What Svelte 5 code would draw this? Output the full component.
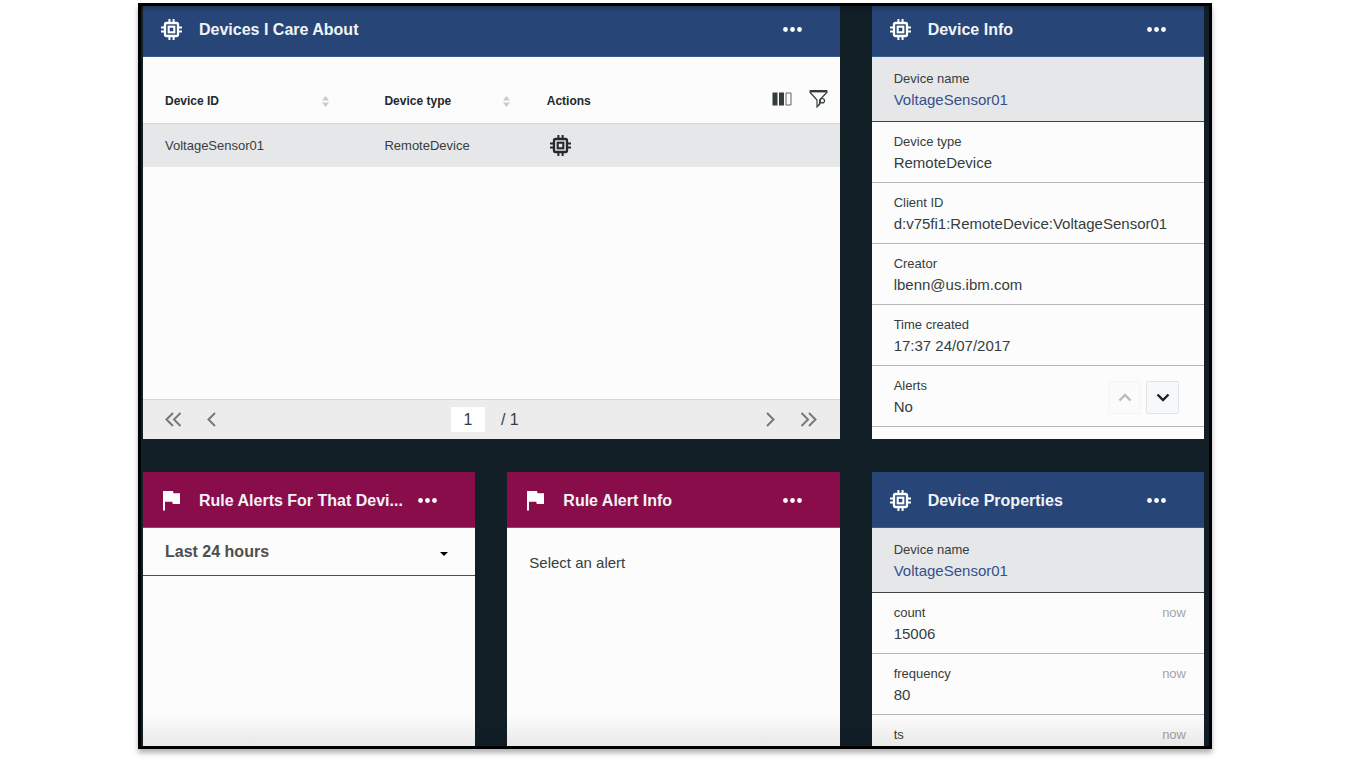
<script>
  const deviceInfo = [
    { label: 'Device type', value: 'RemoteDevice' },
    { label: 'Client ID', value: 'd:v75fi1:RemoteDevice:VoltageSensor01' },
    { label: 'Creator', value: 'lbenn@us.ibm.com' },
    { label: 'Time created', value: '17:37 24/07/2017' },
    { label: 'Alerts', value: 'No' }
  ];
  const properties = [
    { label: 'count', value: '15006' },
    { label: 'frequency', value: '80' },
    { label: 'ts', value: '' }
  ];
  const devices = [{ id: 'VoltageSensor01', type: 'RemoteDevice' }];
  let page = $state('1');
  let range = $state('Last 24 hours');
</script>

{#snippet chip()}
  <svg class="icon" viewBox="0 0 21 21" width="21" height="21" fill="none" stroke="currentColor" aria-hidden="true">
    <rect x="4" y="4" width="13" height="13" rx="1.5" stroke-width="2.300" />
    <rect x="7.700" y="7.700" width="5.600" height="5.600" stroke-width="2.100" />
    <path d="M8.400 0v4M12.600 0v4M8.400 17v4M12.600 17v4M0 8.400h4M0 12.600h4M17 8.400h4M17 12.600h4" stroke-width="2" />
  </svg>
{/snippet}

{#snippet flag()}
  <svg class="icon" viewBox="0 0 21 21" width="21" height="21" fill="currentColor" aria-hidden="true">
    <path d="M2 1h10l.5 2.300H19V14h-7.200l-.6-2.200H4V20.500H2z" />
  </svg>
{/snippet}

{#snippet sort()}
  <svg class="sort" viewBox="0 0 7 11" width="7" height="11" fill="#c9cbcd" aria-hidden="true">
    <path d="M3.500 0L7 4.500H0zM0 6.500h7L3.500 11z" />
  </svg>
{/snippet}

{#snippet head(title, icon)}
  <header class="head">
    {@render icon()}
    <h2>{title}</h2>
    <button class="plain dots" aria-label="More options">
      <svg viewBox="0 0 19 5" width="19" height="5" fill="currentColor" aria-hidden="true">
        <circle cx="2.500" cy="2.500" r="2.400" /><circle cx="9.500" cy="2.500" r="2.400" /><circle cx="16.500" cy="2.500" r="2.400" />
      </svg>
    </button>
  </header>
{/snippet}

{#snippet deviceName()}
  <div class="entry selected">
    <dt>Device name</dt>
    <dd><a href="#device">VoltageSensor01</a></dd>
  </div>
{/snippet}

<main class="frame">
  <div class="board">
    <section class="card blue wide">
      {@render head('Devices I Care About', chip)}
      <div class="fill">
        <table>
          <thead>
            <tr>
              <th class="id"><div class="cell">Device ID {@render sort()}</div></th>
              <th class="type"><div class="cell">Device type {@render sort()}</div></th>
              <th>
                <div class="cell">
                  Actions
                  <span class="tools">
                    <button class="plain" aria-label="Choose columns">
                      <svg viewBox="0 0 20 14" width="20" height="14" aria-hidden="true">
                        <path d="M.5.5h5v13h-5zM7 .5h5v13H7z" fill="#343c3e" />
                        <path d="M14 1h5v12h-5z" fill="none" stroke="#5d6466" />
                      </svg>
                    </button>
                    <button class="plain" aria-label="Filter">
                      <svg viewBox="0 0 19 18" width="19" height="18" fill="none" stroke="#343c3e" stroke-width="1.200" aria-hidden="true">
                        <path d="M.6 1.200h17.800" stroke-width="2.400" />
                        <path d="M.8 2L8 10v7l2.600-2.400V10L18.200 2" />
                        <circle cx="13.300" cy="10.700" r="2.200" />
                        <path d="M11.800 12.200L9.500 15" />
                      </svg>
                    </button>
                  </span>
                </div>
              </th>
            </tr>
          </thead>
          <tbody>
            {#each devices as device}
              <tr>
                <td>{device.id}</td>
                <td>{device.type}</td>
                <td><button class="plain action" aria-label="Show device">{@render chip()}</button></td>
              </tr>
            {/each}
          </tbody>
        </table>
      </div>
      <nav class="pager" aria-label="Pages">
        <div class="steps">
          <button class="plain" aria-label="First page">
            <svg viewBox="0 0 17 15" width="17" height="15" aria-hidden="true"><path d="M8 1L1.500 7.500 8 14M15.500 1L9 7.500l6.500 6.500" /></svg>
          </button>
          <button class="plain" aria-label="Previous page">
            <svg viewBox="0 0 9 15" width="9" height="15" aria-hidden="true"><path d="M8 1L1.500 7.500 8 14" /></svg>
          </button>
        </div>
        <div class="current">
          <input aria-label="Page" bind:value={page} />
          <span>/ 1</span>
        </div>
        <div class="steps">
          <button class="plain" aria-label="Next page">
            <svg viewBox="0 0 9 15" width="9" height="15" aria-hidden="true"><path d="M1 1l6.500 6.500L1 14" /></svg>
          </button>
          <button class="plain" aria-label="Last page">
            <svg viewBox="0 0 17 15" width="17" height="15" aria-hidden="true"><path d="M1.500 1L8 7.500 1.500 14M9 1l6.500 6.500L9 14" /></svg>
          </button>
        </div>
      </nav>
    </section>

    <section class="card blue info">
      {@render head('Device Info', chip)}
      <dl>
        {@render deviceName()}
        {#each deviceInfo as item}
          <div class="entry">
            <dt>{item.label}</dt>
            <dd>{item.value}</dd>
          </div>
        {/each}
      </dl>
      <div class="scrollers">
        <button aria-label="Scroll up" disabled>
          <svg viewBox="0 0 14 9" width="14" height="9" aria-hidden="true"><path d="M1.500 7.500L7 2l5.500 5.500" /></svg>
        </button>
        <button aria-label="Scroll down">
          <svg viewBox="0 0 14 9" width="14" height="9" aria-hidden="true"><path d="M1.500 1.500L7 7l5.500-5.500" /></svg>
        </button>
      </div>
    </section>

    <section class="card red">
      {@render head('Rule Alerts For That Devi...', flag)}
      <div class="range">
        <select aria-label="Time range" bind:value={range}>
          <option>Last 24 hours</option>
        </select>
        <svg viewBox="0 0 8 4" width="8" height="4" aria-hidden="true"><path d="M0 0h8L4 4z" /></svg>
      </div>
    </section>

    <section class="card red">
      {@render head('Rule Alert Info', flag)}
      <p>Select an alert</p>
    </section>

    <section class="card blue">
      {@render head('Device Properties', chip)}
      <dl>
        {@render deviceName()}
        {#each properties as item}
          <div class="entry timed">
            <dt>{item.label}<span class="when">now</span></dt>
            <dd>{item.value}</dd>
          </div>
        {/each}
      </dl>
    </section>
  </div>
</main>

<style>
  :global(body) {
    background: #fff;
  }
  :global(#app) {
    box-sizing: border-box;
    min-height: 100vh;
    padding: 3px 138px 11px;
  }
  .frame {
    position: relative;
    box-sizing: border-box;
    height: calc(100vh - 14px);
    border: 3px solid #000;
    background: #121f27;
    overflow: hidden;
    box-shadow: 0 4px 5px rgba(0, 0, 0, 0.3);
    font: 13px/21px "Liberation Sans", Arial, sans-serif;
    color: #363d40;
  }
  .frame::after {
    content: "";
    position: absolute;
    inset: 0;
    pointer-events: none;
    background:
      linear-gradient(rgba(0, 0, 0, 0.25), transparent 6px),
      linear-gradient(to top, rgba(0, 0, 0, 0.08), transparent 32px);
  }
  .board {
    box-sizing: border-box;
    height: calc(100% + 5px);
    margin-top: -5px;
    padding: 0 5px 0 2px;
    display: grid;
    grid-template-columns: repeat(3, minmax(0, 1fr));
    grid-template-rows: auto minmax(0, 1fr);
    gap: 33px 32px;
  }
  .card {
    position: relative;
    display: flex;
    flex-direction: column;
    min-width: 0;
    overflow: hidden;
    background: #fcfcfc;
  }
  .wide {
    grid-column: span 2;
  }
  .info {
    padding-bottom: 12px;
  }
  .head {
    flex: none;
    box-sizing: border-box;
    height: 56px;
    padding: 2px 38px 0 18px;
    display: flex;
    align-items: center;
    color: #fff;
  }
  .blue .head {
    background: #274677;
    border-bottom: 1px solid #3a5a92;
  }
  .red .head {
    background: #890d4b;
    border-bottom: 1px solid #a8386f;
  }
  .head .icon {
    flex: none;
  }
  h2 {
    flex: 1;
    min-width: 0;
    margin: 0 8px 0 17px;
    font-size: 16px;
    line-height: 24px;
    color: #f1f3f6;
    white-space: nowrap;
    overflow: hidden;
    text-overflow: ellipsis;
  }
  .plain {
    display: flex;
    padding: 0;
    border: 0;
    background: none;
    color: inherit;
    cursor: pointer;
  }
  .fill {
    flex: 1;
  }
  table {
    width: 100%;
    table-layout: fixed;
    border-collapse: collapse;
  }
  th {
    box-sizing: border-box;
    height: 66px;
    padding: 24px 12px 0 22px;
    border-bottom: 1px solid #d6d8d9;
    text-align: left;
    font-size: 12px;
    color: #23292c;
  }
  .id {
    width: 31.5%;
    padding-right: 33px;
  }
  .type {
    width: 23.3%;
    padding-right: 15px;
  }
  .cell {
    display: flex;
    align-items: center;
    justify-content: space-between;
  }
  .tools {
    display: flex;
    align-items: center;
    gap: 17px;
    padding-bottom: 5px;
  }
  td {
    height: 43px;
    padding: 0 22px;
    background: #e6e7e9;
  }
  .action {
    margin-left: 3px;
    color: #23292c;
  }
  .pager {
    display: flex;
    align-items: center;
    justify-content: space-between;
    height: 39px;
    padding: 0 23px 0 22px;
    border-top: 1px solid #d6d6d6;
    background: #ececec;
    font-size: 16px;
  }
  .steps {
    display: flex;
    gap: 25px;
  }
  .steps path {
    fill: none;
    stroke: #74797b;
    stroke-width: 2;
  }
  .current {
    display: flex;
    align-items: center;
    gap: 16px;
    padding-right: 12px;
  }
  input {
    box-sizing: border-box;
    width: 34px;
    height: 25px;
    padding: 0;
    border: 0;
    background: #fff;
    font: inherit;
    color: inherit;
    text-align: center;
  }
  dl,
  dd {
    margin: 0;
  }
  .entry {
    padding: 9px 22px 8px;
    border-bottom: 1px solid #b4b6b7;
  }
  .selected {
    padding: 11px 22px 10px;
    background: #e6e7e9;
    border-bottom-color: #3c4346;
  }
  .timed {
    padding-right: 18px;
  }
  dt {
    display: flex;
    justify-content: space-between;
  }
  dd {
    min-height: 22px;
    font-size: 15px;
    line-height: 22px;
  }
  a {
    color: #35508a;
    text-decoration: none;
  }
  .when {
    color: #a2a5a7;
  }
  .scrollers {
    position: absolute;
    right: 25px;
    bottom: 25px;
    display: flex;
    gap: 5px;
  }
  .scrollers button {
    display: flex;
    align-items: center;
    justify-content: center;
    box-sizing: border-box;
    width: 33px;
    height: 33px;
    padding: 0;
    border: 1px solid #e2e5e8;
    border-radius: 2px;
    background: #f7f8fa;
  }
  .scrollers path {
    fill: none;
    stroke: #1c2224;
    stroke-width: 2.4;
  }
  .scrollers button:disabled {
    border-color: #f4f4f5;
    background: #fbfbfb;
  }
  .scrollers button:disabled path {
    stroke: #b9bcbd;
  }
  .range {
    display: flex;
    align-items: center;
    height: 47px;
    padding-right: 27px;
    border-bottom: 1px solid #4a5052;
  }
  select {
    flex: 1;
    height: 47px;
    padding: 0 22px;
    border: 0;
    appearance: none;
    background: none;
    font: bold 16px/24px "Liberation Sans", Arial, sans-serif;
    color: #4a4f52;
  }
  .range svg {
    margin-top: 5px;
  }
  p {
    margin: 24px 22px;
    font-size: 15px;
    line-height: 22px;
  }
</style>
